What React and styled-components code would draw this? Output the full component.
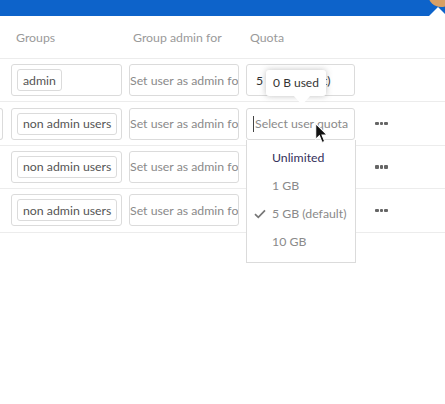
import React from 'react';
import styled, { createGlobalStyle } from 'styled-components';

const GlobalStyle = createGlobalStyle`
  body {
    margin: 0;
    background: #fff;
    font-family: "Lato", "Noto Sans", sans-serif;
    color: #222;
  }
`;

const Page = styled.div`
  position: relative;
  width: 445px;
  height: 404px;
  overflow: hidden;
`;

const TopBar = styled.div`
  position: relative;
  height: 16px;
  background: #0d63ca;
`;

const Avatar = styled.div`
  position: absolute;
  left: 428px;
  top: -19px;
  width: 26px;
  height: 26px;
  border-radius: 50%;
  background: #d9a065;
`;

const MenuArrow = styled.div`
  position: absolute;
  left: 429px;
  bottom: 0;
  width: 0;
  height: 0;
  border-left: 9px solid transparent;
  border-right: 9px solid transparent;
  border-bottom: 9px solid #fff;
`;

const Row = styled.div`
  display: flex;
  align-items: center;
  gap: 7px;
  height: ${({ $header }) => ($header ? '43px' : '43.4px')};
  box-sizing: border-box;
  border-bottom: 1px solid #ececec;
`;

const Lead = styled.div`
  width: 3px;
  height: 32px;
  box-sizing: border-box;
  margin-right: 1px;
  border: ${({ $edge }) => ($edge ? '1px solid #dbdbdb' : 'none')};
  border-left: none;
  border-radius: 0 3px 3px 0;
`;

const HeadCell = styled.div`
  width: ${({ $w }) => $w}px;
  padding-left: ${({ $pad }) => $pad}px;
  box-sizing: border-box;
  font-size: 12.3px;
  color: #9a9a9a;
`;

const Field = styled.div`
  position: relative;
  width: ${({ $w }) => $w}px;
  height: 32px;
  box-sizing: border-box;
  border: 1px solid #dbdbdb;
  border-radius: 3px;
  display: flex;
  align-items: center;
  padding-left: ${({ $pad }) => $pad}px;
  font-size: 12.3px;
  color: ${({ $value }) => ($value ? '#333' : '#8a8a8a')};
  white-space: nowrap;
  overflow: ${({ $open }) => ($open ? 'visible' : 'hidden')};
  background: #fff;
`;

const Clip = styled.span`
  display: block;
  overflow: hidden;
  width: 100%;
`;

const Chip = styled.span`
  display: inline-flex;
  align-items: center;
  height: 22px;
  box-sizing: border-box;
  padding: 0 5px;
  border: 1px solid #dbdbdb;
  border-radius: 3px;
  color: #555;
  font-size: 12.3px;
`;

const Caret = styled.span`
  display: inline-block;
  width: 1px;
  height: 16px;
  margin-right: 1px;
  background: #444;
`;

const More = styled.div`
  display: flex;
  gap: 1px;
  margin-left: 13px;
`;

const Dot = styled.span`
  width: 3.5px;
  height: 3.5px;
  border-radius: 1px;
  background: #666;
`;

const Dropdown = styled.ul`
  position: absolute;
  top: 31px;
  left: -1px;
  width: 110px;
  margin: 0;
  padding: 4px 0 6px;
  list-style: none;
  box-sizing: border-box;
  border: 1px solid #dbdbdb;
  border-top: none;
  background: #fff;
  z-index: 2;
`;

const Option = styled.li`
  position: relative;
  height: 28px;
  display: flex;
  align-items: center;
  padding-left: 25px;
  font-size: 12.3px;
  color: ${({ $active }) => ($active ? '#34305a' : '#8a8a8a')};
`;

const Check = styled.svg`
  position: absolute;
  left: 7px;
  top: 9px;
`;

const Tooltip = styled.div`
  position: absolute;
  left: 19px;
  bottom: 43px;
  width: 60px;
  height: 26px;
  display: flex;
  align-items: center;
  justify-content: center;
  background: #fff;
  border-radius: 3px;
  box-shadow: 0 0 6px rgba(77, 77, 77, 0.35);
  font-size: 12px;
  color: #333;
  z-index: 3;

  &:after {
    content: "";
    position: absolute;
    left: 27px;
    bottom: -9px;
    border-left: 9px solid transparent;
    border-right: 9px solid transparent;
    border-top: 10px solid #fff;
  }
`;

const Cursor = styled.svg`
  position: absolute;
  left: 315px;
  top: 123px;
  z-index: 4;
`;

const users = [
  { group: 'admin', quota: '5 GB (default)' },
  { group: 'non admin users', editing: true },
  { group: 'non admin users' },
  { group: 'non admin users' },
];

const options = ['Unlimited', '1 GB', '5 GB (default)', '10 GB'];

function QuotaMenu() {
  return (
    <Dropdown>
      {options.map((opt, i) => (
        <Option key={opt} $active={i === 0}>
          {opt === '5 GB (default)' && (
            <Check width="12" height="10" viewBox="0 0 12 10">
              <path d="M1 5.2 L4.3 8.4 L11 1.4" fill="none" stroke="#777" strokeWidth="1.7" />
            </Check>
          )}
          {opt}
        </Option>
      ))}
    </Dropdown>
  );
}

export default function App() {
  return (
    <Page>
      <GlobalStyle />
      <TopBar>
        <Avatar />
        <MenuArrow />
      </TopBar>
      <Row $header>
        <Lead />
        <HeadCell $w={111} $pad={5}>Groups</HeadCell>
        <HeadCell $w={110} $pad={4}>Group admin for</HeadCell>
        <HeadCell $w={109} $pad={4}>Quota</HeadCell>
      </Row>
      {users.map((u, i) => (
        <Row key={i}>
          <Lead $edge={u.editing} />
          <Field $w={111} $pad={5}>
            <Chip>{u.group}</Chip>
          </Field>
          <Field $w={110} $pad={0}>
            <Clip>Set user as admin for</Clip>
          </Field>
          {u.quota ? (
            <Field $w={109} $pad={9} $value>{u.quota}</Field>
          ) : (
            <Field $w={109} $pad={6} $open={u.editing}>
              {u.editing && <Caret />}
              Select user quota
              {u.editing && (
                <>
                  <Tooltip>0 B used</Tooltip>
                  <QuotaMenu />
                </>
              )}
            </Field>
          )}
          {i > 0 && (
            <More>
              <Dot />
              <Dot />
              <Dot />
            </More>
          )}
        </Row>
      ))}
      <Cursor width="13" height="21" viewBox="0 0 12 20">
        <path d="M0.5 0.5 L0.5 15.5 L4 12 L6.5 18.5 L9 17.5 L6.5 11.5 L11.5 11.5 Z" fill="#111" stroke="#fff" strokeWidth="1" />
      </Cursor>
    </Page>
  );
}
